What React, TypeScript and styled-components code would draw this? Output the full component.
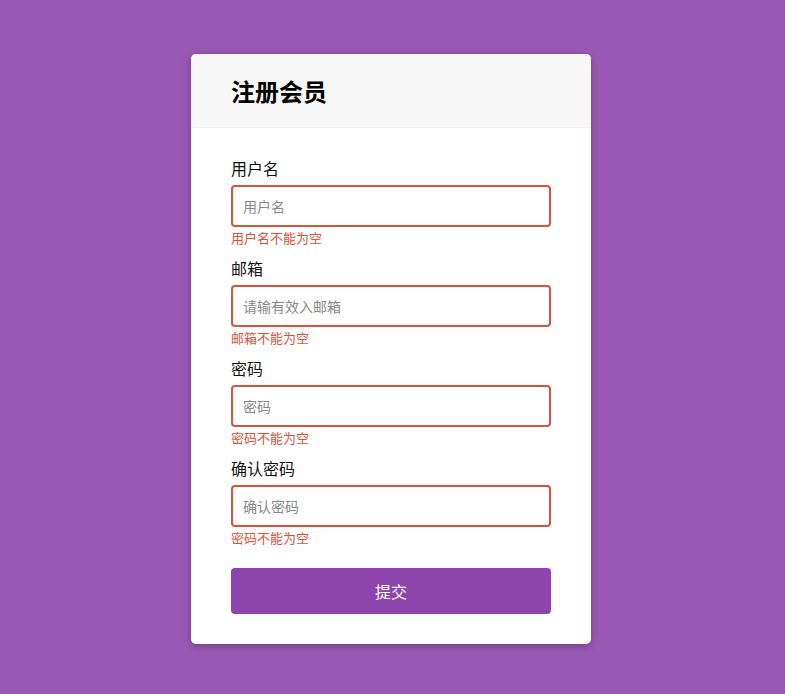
import React, { useState } from 'react';
import styled, { createGlobalStyle } from 'styled-components';

const GlobalStyle = createGlobalStyle`
  * {
    box-sizing: border-box;
  }
  body {
    margin: 0;
    background: #9b59b6;
    font-family: "Open Sans", "Noto Sans CJK SC", sans-serif;
  }
`;

type Field = {
  key: string;
  label: string;
  placeholder: string;
  error: string;
  type: string;
};

const fields: Field[] = [
  { key: 'username', label: '用户名', placeholder: '用户名', error: '用户名不能为空', type: 'text' },
  { key: 'email', label: '邮箱', placeholder: '请输有效入邮箱', error: '邮箱不能为空', type: 'email' },
  { key: 'password', label: '密码', placeholder: '密码', error: '密码不能为空', type: 'password' },
  { key: 'password2', label: '确认密码', placeholder: '确认密码', error: '密码不能为空', type: 'password' },
];

export default function App() {
  const [values, setValues] = useState<Record<string, string>>({});

  return (
    <>
      <GlobalStyle />
      <Page>
        <Card>
          <Header>
            <Title>注册会员</Title>
          </Header>
          <Form onSubmit={(e) => e.preventDefault()}>
            {fields.map((f) => (
              <Group key={f.key}>
                <Label htmlFor={f.key}>{f.label}</Label>
                <Input
                  id={f.key}
                  type={f.type}
                  placeholder={f.placeholder}
                  $invalid={!values[f.key]}
                  value={values[f.key] || ''}
                  onChange={(e) => setValues({ ...values, [f.key]: e.target.value })}
                />
                {!values[f.key] ? <ErrorText>{f.error}</ErrorText> : null}
              </Group>
            ))}
            <Submit type="submit">提交</Submit>
          </Form>
        </Card>
      </Page>
    </>
  );
}

const Page = styled.div`
  min-height: 100vh;
  display: flex;
  justify-content: center;
  padding: 54px 3px 0 0;
`;

const Card = styled.div`
  width: 400px;
  height: 590px;
  background: #fff;
  border-radius: 5px;
  box-shadow: 0 2px 10px rgba(0, 0, 0, 0.3);
  overflow: hidden;
`;

const Header = styled.div`
  background: #f7f7f7;
  border-bottom: 1px solid #f0f0f0;
  padding: 20px 40px 17px;
`;

const Title = styled.h2`
  margin: 0;
  font-size: 24px;
  line-height: 36px;
  font-weight: 700;
  color: #000;
`;

const Form = styled.form`
  padding: 30px 40px;
`;

const Group = styled.div`
  margin-bottom: 10px;
`;

const Label = styled.label`
  display: block;
  font-size: 16px;
  line-height: 22px;
  margin-bottom: 5px;
  color: #111;
`;

const Input = styled.input<{ $invalid: boolean }>`
  display: block;
  width: 100%;
  height: 42px;
  border: 2px solid ${(p) => (p.$invalid ? '#d9533f' : '#f0f0f0')};
  border-radius: 4px;
  padding: 0 10px;
  font-family: inherit;
  font-size: 14px;
  outline: none;

  &::placeholder {
    color: #888;
  }
`;

const ErrorText = styled.small`
  display: block;
  margin-top: 2px;
  font-size: 13px;
  line-height: 19px;
  color: #e0513c;
`;

const Submit = styled.button`
  display: block;
  width: 100%;
  height: 46px;
  margin-top: 20px;
  border: none;
  border-radius: 4px;
  background: #8e44ad;
  color: #fff;
  font-family: inherit;
  font-size: 16px;
  cursor: pointer;
`;
